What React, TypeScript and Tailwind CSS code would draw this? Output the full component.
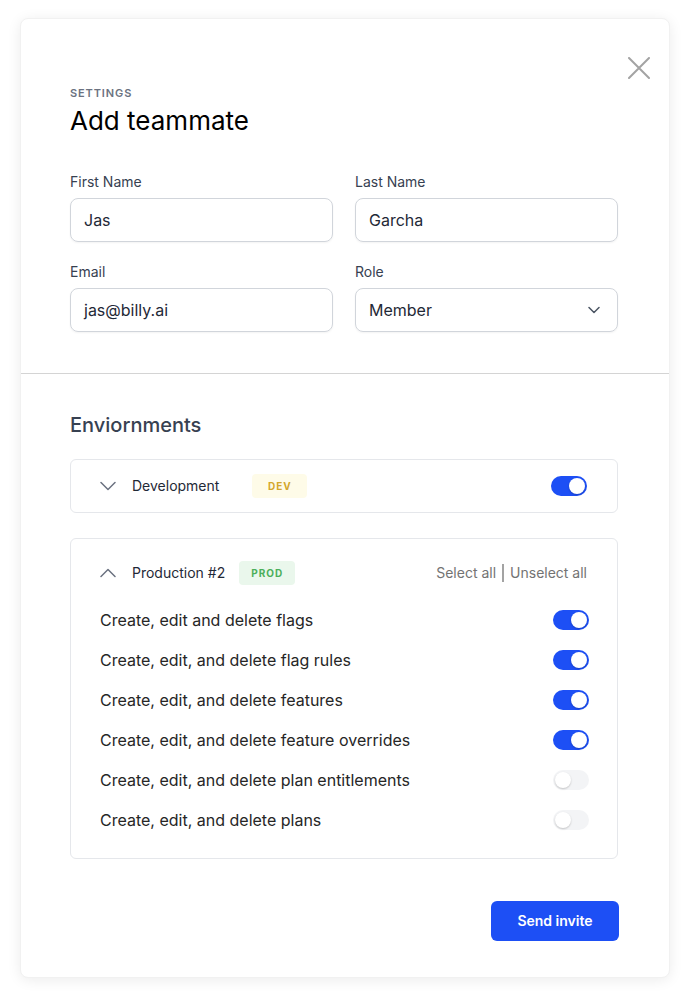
import React from 'react';

const font = { fontFamily: 'Inter, "Noto Sans", sans-serif' };

const Chevron: React.FC<{ up?: boolean; className?: string }> = ({ up, className }) => (
  <svg className={className} width="16" height="16" viewBox="0 0 16 16" fill="none">
    {up ? (
      <path d="M1 11.5L8 4.5L15 11.5" stroke="#6b7280" strokeWidth="1.5" strokeLinecap="round" strokeLinejoin="round" />
    ) : (
      <path d="M1 4.5L8 11.5L15 4.5" stroke="#6b7280" strokeWidth="1.5" strokeLinecap="round" strokeLinejoin="round" />
    )}
  </svg>
);

const Toggle: React.FC<{ on: boolean }> = ({ on }) => (
  <div
    className={
      on
        ? 'w-9 h-5 rounded-full bg-[#1d4ff5] p-[2px] flex justify-end'
        : 'w-9 h-5 rounded-full bg-[#f3f4f6] p-[2px] flex justify-start'
    }
  >
    <div className="w-4 h-4 rounded-full bg-white shadow-[0_1px_2px_rgba(0,0,0,0.2)]" />
  </div>
);

const Field: React.FC<{ label: string; value: string; select?: boolean }> = ({ label, value, select }) => (
  <div className="flex flex-col">
    <label className="text-sm leading-5 text-[#374151]">{label}</label>
    <div className="mt-[6px] h-11 rounded-lg border border-[#d1d5db] shadow-[0_1px_2px_rgba(0,0,0,0.05)] px-[13px] flex items-center justify-between">
      <span className="text-base text-[#1f2937]">{value}</span>
      {select && (
        <svg width="12" height="8" viewBox="0 0 12 8" fill="none" className="mr-[4px]">
          <path d="M1 1.5L6 6.5L11 1.5" stroke="#4b5563" strokeWidth="1.5" strokeLinecap="round" strokeLinejoin="round" />
        </svg>
      )}
    </div>
  </div>
);

const permissions = [
  { name: 'Create, edit and delete flags', on: true },
  { name: 'Create, edit, and delete flag rules', on: true },
  { name: 'Create, edit, and delete features', on: true },
  { name: 'Create, edit, and delete feature overrides', on: true },
  { name: 'Create, edit, and delete plan entitlements', on: false },
  { name: 'Create, edit, and delete plans', on: false },
];

export default function App() {
  return (
    <div className="min-h-screen bg-white pt-[18px] px-[20px] pb-[21px]" style={font}>
      <div className="relative w-[650px] rounded-lg bg-white shadow-[0_2px_14px_rgba(0,0,0,0.08)] border border-[#f1f1f1]">
        {/* close */}
        <button className="absolute right-[19px] top-[38px] w-[22px] h-[22px]">
          <svg width="22" height="22" viewBox="0 0 22 22" fill="none">
            <path d="M1 1L21 21M21 1L1 21" stroke="#a3a3a3" strokeWidth="2" strokeLinecap="round" />
          </svg>
        </button>

        <div className="pl-[49px] pr-[51px] pt-[66px] pb-[41px] border-b border-[#d4d4d4]">
          <div className="text-[11px] leading-4 font-semibold tracking-[0.08em] text-[#6b7280]">SETTINGS</div>
          <h1 className="mt-[4px] text-[26px] leading-8 font-normal text-black">Add teammate</h1>

          <div className="mt-[35px] grid grid-cols-2 gap-x-[22px] gap-y-[20px]">
            <Field label="First Name" value="Jas" />
            <Field label="Last Name" value="Garcha" />
            <Field label="Email" value="jas@billy.ai" />
            <Field label="Role" value="Member" select />
          </div>
        </div>

        <div className="pl-[49px] pr-[51px] pt-[37px] pb-[36px]">
          <h2 className="text-xl leading-7 font-medium text-[#374151]">Enviornments</h2>

          <div className="mt-5 rounded-md border border-[#e5e7eb] py-[14px] pl-[29px] pr-[30px] flex items-center">
            <Chevron />
            <span className="ml-4 text-sm text-[#1f2937]">Development</span>
            <span className="ml-[33px] w-[55px] h-6 rounded bg-[#fefbe8] flex items-center justify-center text-[10px] font-bold tracking-[0.1em] text-[#d4a72c]">
              DEV
            </span>
            <div className="ml-auto">
              <Toggle on />
            </div>
          </div>

          <div className="mt-[25px] rounded-md border border-[#e5e7eb] pt-[22px] pb-[18px] pl-[29px] pr-[28px]">
            <div className="h-6 flex items-center">
              <Chevron up />
              <span className="ml-4 text-sm text-[#1f2937]">Production #2</span>
              <span className="ml-[14px] w-[56px] h-6 rounded bg-[#eaf7ec] flex items-center justify-center text-[10px] font-bold tracking-[0.1em] text-[#4caf5a]">
                PROD
              </span>
              <div className="ml-auto mr-[2px] text-sm text-[#737373] flex items-center">
                <span>Select all</span>
                <span className="mx-[6px] w-[2px] h-[18px] bg-[#a3a3a3]" />
                <span>Unselect all</span>
              </div>
            </div>

            <div className="mt-[15px] flex flex-col">
              {permissions.map((p) => (
                <div key={p.name} className="h-10 flex items-center justify-between">
                  <span className="text-base text-[#262626]">{p.name}</span>
                  <Toggle on={p.on} />
                </div>
              ))}
            </div>
          </div>

          <div className="mt-[42px] flex justify-end">
            <button className="w-32 h-10 rounded-md bg-[#1d4ff5] text-white text-sm font-semibold -mr-[1px]">
              Send invite
            </button>
          </div>
        </div>
      </div>
    </div>
  );
}
